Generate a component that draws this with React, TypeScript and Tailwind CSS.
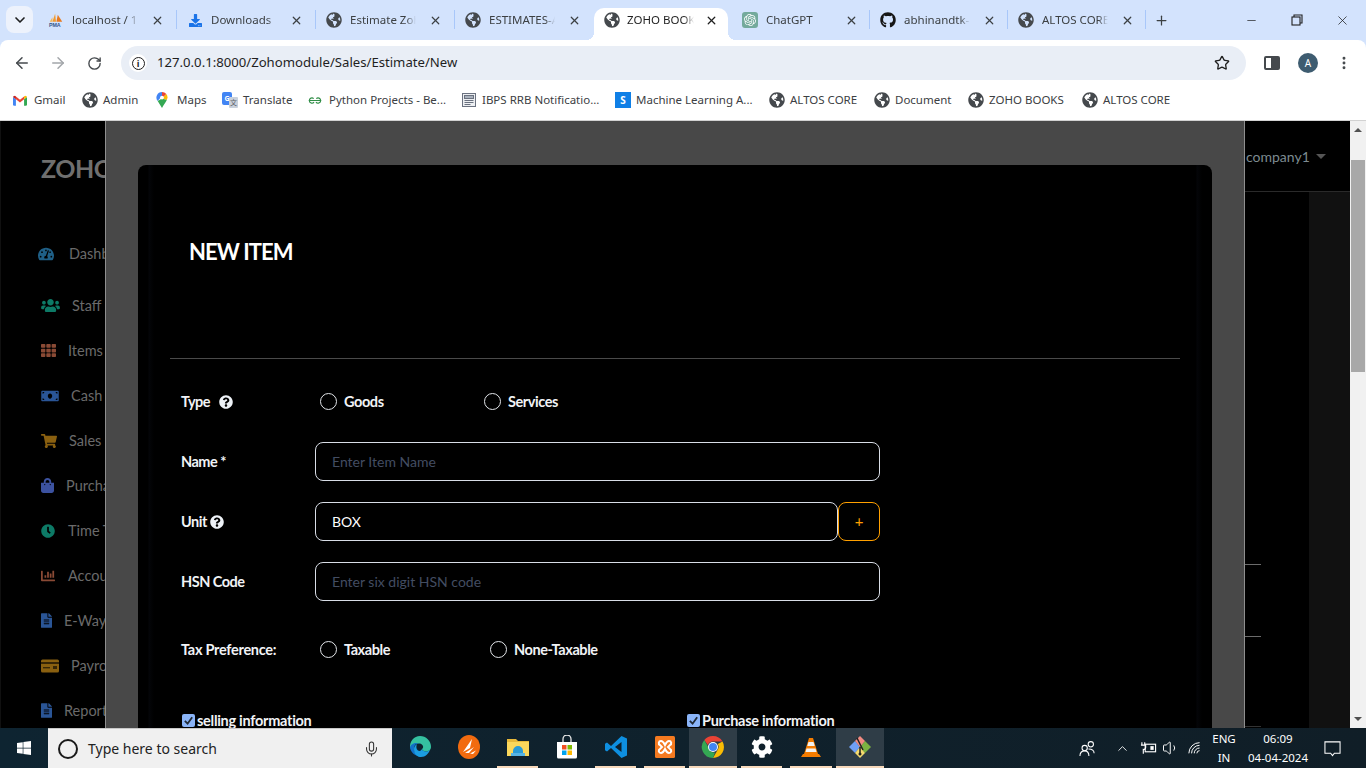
import React from "react";
import { ArrowLeft, ArrowRight, RotateCw, Star, MoreVertical, X, Minus, Plus, ChevronDown, ChevronUp, Volume1, Mic } from "lucide-react";
import { FaGlobeAmericas, FaGithub, FaTachometerAlt, FaUsers, FaTh, FaMoneyBill, FaShoppingCart, FaShoppingBag, FaClock, FaChartBar, FaFileAlt, FaWindows, FaCog, FaQuestionCircle, FaDownload } from "react-icons/fa";
import { SiOpenai } from "react-icons/si";

const Globe = () => <FaGlobeAmericas className="w-4 h-4 text-[#45494d] shrink-0" />;

const PmaIcon = () => (
  <svg viewBox="0 0 18 16" className="w-4 h-4 shrink-0">
    <path d="M5 10 L8 1 L9 10Z" fill="#f29b2f" />
    <path d="M9.5 10 L11 2 L16 10Z" fill="#e8791e" />
    <path d="M2 10 L5 5 L5 10Z" fill="#f6b756" />
    <text x="1" y="15.5" fontSize="6" fontWeight="700" fill="#34558b" fontFamily="Liberation Sans, sans-serif">PMA</text>
  </svg>
);
const GptIcon = () => (
  <span className="w-4 h-4 rounded-[3px] bg-[#74aa9c] flex items-center justify-center shrink-0">
    <SiOpenai className="w-3 h-3 text-white" />
  </span>
);

type Tab = { icon: React.ReactNode; title: string; w: string; sep: boolean };
const tabsBefore: Tab[] = [
  { icon: <PmaIcon />, title: "localhost / 127.0.0.1", w: "w-[139px]", sep: true },
  { icon: <FaDownload className="w-[13px] h-[13px] text-[#1a73e8] shrink-0 mx-[1.5px]" />, title: "Downloads", w: "w-[139px]", sep: true },
  { icon: <Globe />, title: "Estimate Zoho Books", w: "w-[139px]", sep: true },
  { icon: <Globe />, title: "ESTIMATES-ALTOS", w: "w-[139px]", sep: false },
];
const tabsAfter: Tab[] = [
  { icon: <GptIcon />, title: "ChatGPT", w: "w-[138px]", sep: true },
  { icon: <FaGithub className="w-4 h-4 text-[#161616] shrink-0" />, title: "abhinandtk-1/zoho", w: "w-[138px]", sep: true },
  { icon: <Globe />, title: "ALTOS CORE", w: "w-[138px]", sep: true },
];

function TabItem({ t }: { t: Tab }) {
  return (
    <div className={`${t.w} h-[32px] pb-[8px] flex items-center pl-[10px] relative shrink-0`}>
      {t.icon}
      <span className="ml-[8px] w-[66px] overflow-hidden whitespace-nowrap text-[11.5px] text-[#3c4043] [mask-image:linear-gradient(to_right,black_85%,transparent)]">{t.title}</span>
      <X className="w-[13px] h-[13px] text-[#3c4043] ml-[13px]" strokeWidth={2.2} />
      {t.sep && <span className="absolute right-0 top-[2px] w-px h-[19px] bg-[#a8c7fa]" />}
    </div>
  );
}

const GmailIcon = () => (
  <svg viewBox="0 0 24 18" className="w-[14px] h-[11px] shrink-0">
    <path d="M0 3v13a2 2 0 0 0 2 2h3V7z" fill="#4285f4" />
    <path d="M24 3v13a2 2 0 0 1-2 2h-3V7z" fill="#34a853" />
    <path d="M5 7v-5L12 7.5 19 2v5l-7 5.5z" fill="#ea4335" />
    <path d="M0 3a3 3 0 0 1 5-1v5L0 3z" fill="#c5221f" />
    <path d="M24 3a3 3 0 0 0-5-1v5l5-4z" fill="#fbbc04" />
  </svg>
);
const MapsIcon = () => (
  <svg viewBox="0 0 14 20" className="w-[12px] h-[16px] shrink-0">
    <path d="M7 0a7 7 0 0 0-5.4 11.4L7 5z" fill="#4285f4" />
    <path d="M7 0a7 7 0 0 1 5.4 2.6L7 8z" fill="#ea4335" />
    <path d="M12.4 2.6A7 7 0 0 1 13 10L7 8z" fill="#fbbc04" />
    <path d="M1.6 11.4 7 20c1.5-3.5 4.5-6.5 6-10L7 8z" fill="#34a853" />
    <circle cx="7" cy="7" r="2.4" fill="#fff" />
  </svg>
);
const TranslateIcon = () => (
  <span className="relative w-4 h-4 shrink-0 block">
    <span className="absolute left-0 top-0 w-[10px] h-[13px] bg-[#4285f4] rounded-[2px] text-white text-[7px] font-bold text-center leading-[13px]">G</span>
    <span className="absolute right-0 bottom-0 w-[9px] h-[11px] bg-[#c9d1dc] rounded-[1px] text-[#5f6368] text-[7px] text-center leading-[11px] font-['Noto_Sans_CJK_SC',sans-serif]">文</span>
  </span>
);
const GfgIcon = () => (
  <svg viewBox="0 0 16 10" className="w-[14px] h-[9px] shrink-0" fill="none" stroke="#2f8d46" strokeWidth="1.3">
    <path d="M8 5H1.5a3 3 0 0 1 5-2.2M8 5h6.5a3 3 0 0 0-5-2.2" />
    <path d="M1.5 5a3 3 0 0 0 5.4 1.8M14.5 5a3 3 0 0 1-5.4 1.8" />
  </svg>
);
const IbpsIcon = () => (
  <svg viewBox="0 0 16 16" className="w-4 h-4 shrink-0" fill="none" stroke="#6b7280" strokeWidth="1">
    <rect x="1.5" y="1.5" width="13" height="13" fill="#eef0f3" />
    <rect x="3.5" y="3.5" width="9" height="3" fill="#aab2bd" />
    <path d="M3.5 8.5h9M3.5 10.5h9M3.5 12.5h6" />
  </svg>
);
const SIcon = () => <span className="w-4 h-4 bg-[#0f7fe6] text-white text-[10px] font-bold flex items-center justify-center shrink-0">S</span>;

const bookmarks: { icon: React.ReactNode; label: string; w: string }[] = [
  { icon: <GmailIcon />, label: "Gmail", w: "w-[69px]" },
  { icon: <Globe />, label: "Admin", w: "w-[74px]" },
  { icon: <MapsIcon />, label: "Maps", w: "w-[66px]" },
  { icon: <TranslateIcon />, label: "Translate", w: "w-[86px]" },
  { icon: <GfgIcon />, label: "Python Projects - Be...", w: "w-[153px]" },
  { icon: <IbpsIcon />, label: "IBPS RRB Notificatio...", w: "w-[154px]" },
  { icon: <SIcon />, label: "Machine Learning A...", w: "w-[154px]" },
  { icon: <Globe />, label: "ALTOS CORE", w: "w-[105px]" },
  { icon: <Globe />, label: "Document", w: "w-[94px]" },
  { icon: <Globe />, label: "ZOHO BOOKS", w: "w-[114px]" },
  { icon: <Globe />, label: "ALTOS CORE", w: "w-[105px]" },
];

const side: { icon: React.ReactNode; label: string; row: string }[] = [
  { icon: <FaTachometerAlt className="w-4 h-4 text-[#1f5f86] shrink-0" />, label: "Dashboard", row: "pl-[37px] gap-[15px] mb-[7px]" },
  { icon: <FaUsers className="w-[19px] h-[15px] text-[#0d7a66] shrink-0" />, label: "Staff", row: "pl-[40px] gap-[12px]" },
  { icon: <FaTh className="w-[15px] h-[15px] text-[#8a4a35] shrink-0" />, label: "Items", row: "pl-[40px] gap-[12px]" },
  { icon: <FaMoneyBill className="w-[18px] h-[14px] text-[#2a5596] shrink-0" />, label: "Cash in hand", row: "pl-[40px] gap-[12px]" },
  { icon: <FaShoppingCart className="w-4 h-4 text-[#8a6010] shrink-0" />, label: "Sales", row: "pl-[40px] gap-[12px]" },
  { icon: <FaShoppingBag className="w-[13px] h-[15px] text-[#3c52a0] shrink-0" />, label: "Purchase", row: "pl-[40px] gap-[12px]" },
  { icon: <FaClock className="w-[14px] h-[14px] text-[#0d7a66] shrink-0" />, label: "Time Tracking", row: "pl-[40px] gap-[13px]" },
  { icon: <FaChartBar className="w-[14px] h-[14px] text-[#8a4a35] shrink-0" />, label: "Accountant", row: "pl-[40px] gap-[13px]" },
  { icon: <FaFileAlt className="w-[11px] h-[15px] text-[#2a5596] shrink-0" />, label: "E-Way Bill", row: "pl-[40px] gap-[12px]" },
  { icon: <svg viewBox="0 0 18 14" className="w-[18px] h-[14px] shrink-0"><rect width="18" height="13" y="0.5" rx="1.5" fill="#8a6010" /><rect y="3" width="18" height="2" fill="#000" opacity=".6" /><rect x="2" y="8" width="7" height="1.4" fill="#000" opacity=".6" /><rect x="12" y="7" width="4" height="3" fill="#000" opacity=".6" /></svg>, label: "Payroll", row: "pl-[40px] gap-[12px]" },
  { icon: <FaFileAlt className="w-[11px] h-[15px] text-[#2a5596] shrink-0" />, label: "Reports", row: "pl-[40px] gap-[12px]" },
];

const labelCls = "font-bold text-[14.5px] tracking-[-0.5px] text-[#f1f3f6]";
const inputCls = "h-full bg-black border border-[#d8dde6] rounded-lg px-4 text-[14px] text-white placeholder:text-[#434d62] outline-none font-['Lato',sans-serif]";
const radioCls = "appearance-none w-[17px] h-[17px] rounded-full border border-[#e3e6ea] bg-black shrink-0 m-0";

function Radio({ label, w }: { label: string; w: string }) {
  return (
    <label className={`${w} flex items-center gap-[7px] shrink-0`}>
      <input type="radio" className={radioCls} />
      <span className="text-[14.5px] font-bold tracking-[-0.42px] text-[#f1f3f6]">{label}</span>
    </label>
  );
}

function Check({ label, w }: { label: string; w: string }) {
  return (
    <label className={`${w} flex items-center gap-[2px] shrink-0`}>
      <span className="w-[13px] h-[13px] rounded-[2px] bg-[#8ab4f8] flex items-center justify-center shrink-0 -mt-[2px]">
        <svg viewBox="0 0 12 12" className="w-[11px] h-[11px]" fill="none" stroke="#202a36" strokeWidth="2"><path d="M2 6.5 5 9.5 10 2.5" /></svg>
      </span>
      <span className="text-[14.5px] font-bold tracking-[-0.28px] text-[#f1f3f6] leading-[20px]">{label}</span>
    </label>
  );
}

const ChromeIcon = () => (
  <svg viewBox="0 0 24 24" className="w-6 h-6">
    <path d="M12 1a11 11 0 0 1 9.5 5.5H12a5.5 5.5 0 0 0-5.2 3.6L3.3 5A11 11 0 0 1 12 1z" fill="#ea4335" />
    <path d="M21.5 6.500A11 11 0 0 1 12 23l4.700-8.200A5.500 5.500 0 0 0 16.800 9z" fill="#fbbc04" />
    <path d="M3.300 5 8 13.500a5.500 5.500 0 0 0 6 4L12 23A11 11 0 0 1 3.300 5z" fill="#34a853" />
    <circle cx="12" cy="12" r="5" fill="#fff" />
    <circle cx="12" cy="12" r="4" fill="#4285f4" />
  </svg>
);
const EdgeIcon = () => (
  <svg viewBox="0 0 24 24" className="w-6 h-6">
    <path d="M12 1a11 11 0 0 1 11 11c0 3-2.500 4.500-5 4.500-2 0-4-1-4-2.500 2-1 1.500-5-2.500-5.500C7 8 3.500 10 2 13 1.500 6 6 1 12 1z" fill="#35c1a0" />
    <path d="M2 13c0-3 3-5 7-5 2.500 0 4 .500 4 .500-5-1-7 2-7 5 0 4 4 8.500 10 7.500A11 11 0 0 1 2 13z" fill="#1170c9" />
    <path d="M14 14c0 1.500 2 2.500 4 2.500 1.500 0 3-.500 4-2-1 4-5 8-10 7.500-4-.500-6-4-6-8 0-2 1-4 3-5-1 2-1 5 1 6.500 1.500 1 3 .500 4-1.500z" fill="#1b9de2" />
  </svg>
);
const OrangeIcon = () => (
  <svg viewBox="0 0 24 24" className="w-6 h-6">
    <ellipse cx="12" cy="12" rx="11" ry="12" fill="#f26b0f" />
    <path d="M6 17 15 4l-2 9zM8 18l9-6-5 6zM13 18.500l6-3-3 3.500z" fill="#fff" />
  </svg>
);
const FolderIcon = () => (
  <svg viewBox="0 0 24 24" className="w-6 h-6">
    <path d="M1 4h9l2 2h11v3H1z" fill="#e8b93a" />
    <path d="M1 7h22v14H1z" fill="#fbd75b" />
    <path d="M7 21v-5a5 5 0 0 1 10 0v5h-3v-3h-4v3z" fill="#2a9bd6" />
    <rect x="5" y="18" width="14" height="3" fill="#57b4e3" />
  </svg>
);
const StoreIcon = () => (
  <svg viewBox="0 0 24 24" className="w-6 h-6">
    <path d="M8 7V4a4 4 0 0 1 8 0v3" fill="none" stroke="#e6e6e6" strokeWidth="1.300" />
    <path d="M2 7h20v15a1.500 1.500 0 0 1-1.500 1.500h-17A1.500 1.500 0 0 1 2 22z" fill="#fff" />
    <rect x="7" y="10" width="4.500" height="4.500" fill="#f25022" />
    <rect x="12.500" y="10" width="4.500" height="4.500" fill="#7fba00" />
    <rect x="7" y="15.500" width="4.500" height="4.500" fill="#00a4ef" />
    <rect x="12.500" y="15.500" width="4.500" height="4.500" fill="#ffb900" />
  </svg>
);
const VsIcon = () => (
  <svg viewBox="0 0 24 24" className="w-6 h-6">
    <path d="M17.500 1 23 3.500v17L17.500 23 7 13l-4 3.500L1 15.300v-6.600L3 7.500 7 11z" fill="#0e8fe0" />
    <path d="M17.500 7 11 12l6.500 5z" fill="#0d1f2b" />
  </svg>
);
const XamppIcon = () => (
  <svg viewBox="0 0 24 24" className="w-6 h-6">
    <rect x="2" y="1" width="20" height="22" rx="1.500" fill="#f57a20" />
    <path d="M8 6c2 0 3 2 4 4 1-2 2-4 4-4 2.500 0 3 3 1 4l-2 2 2 2c2 1 1.500 4-1 4-2 0-3-2-4-4-1 2-2 4-4 4-2.500 0-3-3-1-4l2-2-2-2c-2-1-1.500-4 1-4z" fill="none" stroke="#fff" strokeWidth="2" />
  </svg>
);
const VlcIcon = () => (
  <svg viewBox="0 0 24 24" className="w-6 h-6">
    <path d="M2 22h20l-2-3H4z" fill="#f57c00" />
    <path d="M10 3h4l5 16H5z" fill="#f57c00" />
    <path d="M9.500 7h5l1.200 4H8.300zM7.500 13.500h9l1 3.500h-11z" fill="#f2f2f2" />
  </svg>
);
const GitIcon = () => (
  <svg viewBox="0 0 24 24" className="w-6 h-6">
    <path d="M1 12l6-6 5 6-5 6z" fill="#6f9ff5" />
    <path d="M12 12l5-6 6 6-6 6z" fill="#7cb342" />
    <path d="M7 6l5-5 5 5-5 6z" fill="#f28b82" />
    <path d="M7 18l5-6 5 6-5 5z" fill="#f7dc6f" />
    <path d="M9 3l6 12M12 12v7" stroke="#222" strokeWidth="1.500" fill="none" />
    <circle cx="12" cy="19" r="1.500" fill="#222" />
  </svg>
);

const taskIcons: { icon: React.ReactNode; cls: string; bar: string }[] = [
  { icon: <EdgeIcon />, cls: "w-[49px]", bar: "" },
  { icon: <OrangeIcon />, cls: "w-[49px]", bar: "" },
  { icon: <FolderIcon />, cls: "w-[49px]", bar: "bg-[#f7d9bb] mx-[4px]" },
  { icon: <StoreIcon />, cls: "w-[49px]", bar: "" },
  { icon: <VsIcon />, cls: "w-[49px]", bar: "bg-[#f7d9bb] mx-[4px]" },
  { icon: <XamppIcon />, cls: "w-[49px]", bar: "bg-[#f7d9bb] mx-[4px]" },
  { icon: <ChromeIcon />, cls: "w-[48px] bg-[#2f3d47]", bar: "bg-[#f7d9bb]" },
  { icon: <FaCog className="w-[22px] h-[22px] text-white" />, cls: "w-[49px]", bar: "bg-[#f7d9bb] mx-[4px]" },
  { icon: <VlcIcon />, cls: "w-[50px]", bar: "bg-[#f7d9bb] mx-[4px]" },
  { icon: <GitIcon />, cls: "w-[48px] bg-[#2f3d47]", bar: "bg-[#f7d9bb]" },
];

export default function App() {
  return (
    <div className="w-[1366px] h-[768px] flex flex-col overflow-hidden bg-black font-['Noto_Sans',sans-serif]">
      {/* tab strip */}
      <div className="h-[40px] bg-[#d3e3fd] flex items-end shrink-0 relative">
        <div className="w-[38px] h-[40px] shrink-0 flex items-start pl-[6px] pt-[6px]">
          <div className="w-[27px] h-[27px] rounded-lg bg-[#edf2fc] flex items-center justify-center">
            <ChevronDown className="w-4 h-4 text-[#1f1f1f]" strokeWidth={2.5} />
          </div>
        </div>
        {tabsBefore.map((t) => <TabItem key={t.title} t={t} />)}
        <div className="w-[134px] h-[32px] pb-[8px] mr-[4px] bg-white rounded-t-[10px] flex items-center pl-[10px] shrink-0 relative">
          <span className="absolute left-[-8px] bottom-0 w-[8px] h-[8px] bg-[radial-gradient(circle_at_0_0,transparent_8px,white_8px)]" />
          <Globe />
          <span className="ml-[7px] w-[67px] overflow-hidden whitespace-nowrap text-[11.5px] text-[#1f1f1f] [mask-image:linear-gradient(to_right,black_85%,transparent)]">ZOHO BOOKS</span>
          <X className="w-[13px] h-[13px] text-[#1f1f1f] ml-[11px]" strokeWidth={2.4} />
          <span className="absolute right-[-8px] bottom-0 w-[8px] h-[8px] bg-[radial-gradient(circle_at_100%_0,transparent_8px,white_8px)]" />
        </div>
        {tabsAfter.map((t) => <TabItem key={t.title} t={t} />)}
        <div className="h-[32px] pb-[8px] flex items-center pl-[8px] shrink-0">
          <Plus className="w-[15px] h-[15px] text-[#3c4043]" strokeWidth={2} />
        </div>
        <div className="ml-auto h-[40px] flex items-center pr-[16px] shrink-0">
          <Minus className="w-[13px] h-[13px] text-[#1f1f1f]" strokeWidth={1.3} />
          <svg viewBox="0 0 12 12" className="w-[12px] h-[12px] ml-[33px]" fill="none" stroke="#1f1f1f" strokeWidth="1.100"><rect x="1" y="3" width="8" height="8" /><path d="M3 3V1h8v8H9" /></svg>
          <X className="w-[15px] h-[15px] text-[#1f1f1f] ml-[32px]" strokeWidth={1.2} />
        </div>
      </div>

      {/* toolbar */}
      <div className="h-[40px] bg-[#d3e3fd] shrink-0">
        <div className="h-full bg-white rounded-t-[8px] flex items-center pt-[6px]">
          <ArrowLeft className="w-[18px] h-[18px] text-[#45494d] ml-[13px]" strokeWidth={2} />
          <ArrowRight className="w-[18px] h-[18px] text-[#a3a6aa] ml-[18px]" strokeWidth={2} />
          <RotateCw className="w-[15px] h-[15px] text-[#45494d] ml-[20px]" strokeWidth={2.2} />
          <div className="ml-[19px] w-[1125px] h-[34px] rounded-full bg-[#e9eef6] flex items-center pl-[8px] shrink-0">
            <span className="w-[18px] h-[18px] rounded-full bg-white flex items-center justify-center">
              <span className="w-[13px] h-[13px] rounded-full border-[1.5px] border-[#1f1f1f] flex items-center justify-center text-[9px] font-bold leading-none text-[#1f1f1f]">i</span>
            </span>
            <span className="ml-[10px] text-[13.15px] text-[#1f1f1f]">127.0.0.1:8000/Zohomodule/Sales/Estimate/New</span>
            <Star className="w-[16px] h-[16px] text-[#1f1f1f] ml-auto mr-[16px]" strokeWidth={2} />
          </div>
          <span className="ml-[18px] w-[16px] h-[14px] border-2 border-[#45494d] rounded-[2px] flex justify-end shrink-0">
            <span className="w-[7px] h-full bg-[#45494d]" />
          </span>
          <span className="ml-[18px] w-[20px] h-[20px] rounded-full bg-[#3e5c70] text-white text-[10px] flex items-center justify-center shrink-0">A</span>
          <MoreVertical className="w-[16px] h-[16px] text-[#45494d] ml-[18px]" strokeWidth={2.4} />
        </div>
      </div>

      {/* bookmarks */}
      <div className="h-[40px] bg-white flex items-center pl-[13px] border-b border-[#d2d2d2] shrink-0 box-content">
        {bookmarks.map((b, i) => (
          <div key={i} className={`${b.w} flex items-center shrink-0`}>
            <span className="w-[21px] shrink-0 flex items-center">{b.icon}</span>
            <span className="text-[11.5px] text-[#3c4043] whitespace-nowrap">{b.label}</span>
          </div>
        ))}
      </div>

      {/* page */}
      <div className="flex-1 min-h-0 flex overflow-hidden font-['Lato',sans-serif]">
        <aside className="w-[105px] shrink-0 bg-black overflow-hidden border-l border-[#101010]">
          <div className="h-[110px] pt-[30px] pl-[40px] text-[25px] font-bold text-[#6f6f6f] whitespace-nowrap leading-[34px] tracking-[-0.5px]">ZOHO BOOKS</div>
          {side.map((s) => (
            <div key={s.label} className={`h-[45px] flex items-center whitespace-nowrap text-[14.5px] text-[#6a6a6a] ${s.row}`}>
              {s.icon}
              <span>{s.label}</span>
            </div>
          ))}
        </aside>

        <div className="w-[1140px] shrink-0 bg-[#484848] border-x border-[#8f8f8f] pl-[32px] pt-[44px]">
          <div className="w-[1074px] h-[700px] rounded-lg bg-[linear-gradient(to_right,#000_10px,#040508_11px,#000_16px,#000_1058px,#040508_1059px,#000_1064px)]">
            <div className="h-[193px] pt-[73px] pl-[51px]">
              <h2 className="text-[22px] font-bold leading-[28px] tracking-[-0.95px] text-white">NEW ITEM</h2>
            </div>
            <hr className="mx-[32px] border-0 h-px bg-[#4a4a4a]" />
            <div className="pl-[43px] pt-[23px]">
              <div className="h-[39px] mb-[21px] flex items-center">
                <div className={`w-[134px] flex items-center gap-[6px] shrink-0 ${labelCls}`}>Type <FaQuestionCircle className="w-[14px] h-[14px] text-[#eef2f7] ml-[3px]" /></div>
                <div className="flex pl-[5px]">
                  <Radio label="Goods" w="w-[164px]" />
                  <Radio label="Services" w="w-[160px]" />
                </div>
              </div>
              <div className="h-[39px] mb-[21px] flex items-center">
                <div className={`w-[134px] shrink-0 ${labelCls}`}>Name *</div>
                <input className={`w-[565px] ${inputCls}`} placeholder="Enter Item Name" />
              </div>
              <div className="h-[39px] mb-[21px] flex items-center">
                <div className={`w-[134px] flex items-center gap-[3px] shrink-0 ${labelCls}`}>Unit <FaQuestionCircle className="w-[14px] h-[14px] text-[#eef2f7]" /></div>
                <input className={`w-[523px] ${inputCls}`} defaultValue="BOX" />
                <button className="w-[42px] h-full border border-[#ffa000] rounded-lg text-[#ffa000] text-[15px] bg-black">+</button>
              </div>
              <div className="h-[39px] mb-[29px] flex items-center">
                <div className={`w-[134px] shrink-0 ${labelCls}`}>HSN Code</div>
                <input className={`w-[565px] ${inputCls}`} placeholder="Enter six digit HSN code" />
              </div>
              <div className="h-[39px] mb-[42px] flex items-center">
                <div className="w-[134px] shrink-0 whitespace-nowrap font-bold text-[14.5px] tracking-[-0.28px] text-[#f1f3f6]">Tax Preference:</div>
                <div className="flex pl-[5px]">
                  <Radio label="Taxable" w="w-[170px]" />
                  <Radio label="None-Taxable" w="w-[160px]" />
                </div>
              </div>
              <div className="flex pl-[1px]">
                <Check label="selling information" w="w-[505px]" />
                <Check label="Purchase information" w="w-[200px]" />
              </div>
            </div>
          </div>
        </div>

        <div className="flex-1 min-w-0 flex flex-col bg-black">
          <div className="h-[71px] border-b border-[#2a2a2a] flex items-center text-[14px] text-[#7d8b90] shrink-0">
            <span className="pl-[1px]">company1</span>
            <span className="ml-[6px] mt-[1px] w-0 h-0 border-x-[5px] border-x-transparent border-t-[5px] border-t-[#555]" />
          </div>
          <div className="flex-1 flex">
            <div className="w-[64px] shrink-0 pt-[372px]">
              <div className="w-[16px] h-px bg-[#6b6b6b]" />
              <div className="w-[16px] h-px bg-[#6b6b6b] mt-[71px]" />
              <div className="w-[16px] h-px bg-[#333] mt-[89px]" />
            </div>
            <div className="flex-1 bg-[#111111]" />
          </div>
        </div>

        <div className="w-[16px] shrink-0 bg-[#f1f1f1] flex flex-col items-center relative">
          <span className="mt-[7px] w-0 h-0 border-x-[4px] border-x-transparent border-b-[4px] border-b-[#505050]" />
          <div className="mt-[28px] w-[14px] h-[212px] bg-[#a8a8a8]" />
          <span className="mt-auto mb-[7px] w-0 h-0 border-x-[4px] border-x-transparent border-t-[4px] border-t-[#505050]" />
        </div>
      </div>

      {/* taskbar */}
      <div className="h-[40px] shrink-0 bg-gradient-to-r from-[#0e2431] to-[#101e27] flex items-stretch font-['Noto_Sans',sans-serif]">
        <div className="w-[48px] flex items-center justify-center shrink-0">
          <FaWindows className="w-[16px] h-[16px] text-white" />
        </div>
        <div className="w-[344px] bg-[#f0f0f0] flex items-center shrink-0 border-t border-[#c8c8c8]">
          <span className="ml-[10px] w-[20px] h-[20px] rounded-full border-[2.5px] border-[#1a1a1a]" />
          <span className="ml-[10px] text-[14px] text-[#222]">Type here to search</span>
          <Mic className="w-[17px] h-[20px] text-[#333] ml-auto mr-[12px]" strokeWidth={1.5} />
        </div>
        <div className="flex shrink-0 pl-[3px]">
          {taskIcons.map((t, i) => (
            <div key={i} className={`${t.cls} h-full flex flex-col shrink-0`}>
              <div className="flex-1 flex items-center justify-center">{t.icon}</div>
              <div className={`h-[2px] ${t.bar}`} />
            </div>
          ))}
        </div>
        <div className="ml-auto flex items-center text-white shrink-0 pr-[25px]">
          <svg viewBox="0 0 18 18" className="w-[17px] h-[17px]" fill="none" stroke="#fff" strokeWidth="1.100"><circle cx="6" cy="8.500" r="2.800" /><circle cx="12.500" cy="4.500" r="2.800" /><path d="M1 17c0-4 2-5.500 5-5.500S10.500 13 10.500 17M10 9.500c3 0 6 1 6 4.500" /></svg>
          <ChevronUp className="w-[15px] h-[15px] ml-[19px]" strokeWidth={1.4} />
          <svg viewBox="0 0 18 14" className="w-[17px] h-[14px] ml-[10px]" fill="none" stroke="#fff" strokeWidth="1.200"><rect x="5.500" y="3" width="11" height="8" /><rect x="11" y="5" width="3.500" height="4" fill="#fff" stroke="none" /><path d="M2 1v3M5 1v3M1 4h5v2.500a2 2 0 0 1-2.500 2V13" /></svg>
          <Volume1 className="w-[18px] h-[18px] ml-[5.500px]" strokeWidth={1.3} />
          <svg viewBox="0 0 18 14" className="w-[16px] h-[14px] ml-[8px]" fill="none" stroke="#fff" strokeWidth="1.100"><path d="M1 13A12 12 0 0 1 13 1M4 13a9 9 0 0 1 9-9M7 13a6 6 0 0 1 6-6M10 13a3 3 0 0 1 3-3" /></svg>
          <div className="ml-[4px] w-[32px] text-center text-[11.5px] leading-[19px]"><div>ENG</div><div>IN</div></div>
          <div className="ml-[5px] w-[66px] text-center text-[11.5px] leading-[19px]"><div>06:09</div><div>04-04-2024</div></div>
          <svg viewBox="0 0 18 18" className="w-[17px] h-[17px] ml-[13px]" fill="none" stroke="#fff" strokeWidth="1.100"><path d="M1 2h16v12h-6l-2 2.500L7 14H1z" /></svg>
        </div>
      </div>
    </div>
  );
}
